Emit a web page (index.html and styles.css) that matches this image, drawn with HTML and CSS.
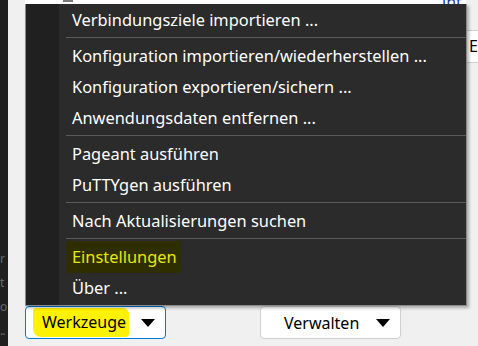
FILE: index.html
```html
<!DOCTYPE html>
<html lang="de">
  <head>
    <meta charset="UTF-8" />
    <title>Werkzeuge</title>
    <link rel="stylesheet" href="styles.css">
  </head>
  <body>
    <div class="side">
      <span>r</span>
      <span>t</span>
      <span>o</span>
      <span>..</span>
    </div>

    <div class="window">
      <div class="topstrip"><span class="tick"></span></div>
      <div class="rightpane">
        <span class="peek">int</span>
        <div class="field">E</div>
      </div>

      <div class="buttons">
        <button class="dropdown active"><span class="mark">Werkzeuge</span><span class="arrow"></span></button>
        <button class="dropdown plain"><span>Verwalten</span><span class="arrow"></span></button>
      </div>

      <div class="menu">
        <div class="gutter"></div>
        <ul class="items">
          <li>Verbindungsziele importieren ...</li>
          <li class="sep"></li>
          <li>Konfiguration importieren/wiederherstellen ...</li>
          <li>Konfiguration exportieren/sichern ...</li>
          <li>Anwendungsdaten entfernen ...</li>
          <li class="sep"></li>
          <li>Pageant ausführen</li>
          <li>PuTTYgen ausführen</li>
          <li class="sep"></li>
          <li>Nach Aktualisierungen suchen</li>
          <li class="sep"></li>
          <li class="hilite"><span>Einstellungen</span></li>
          <li>Über ...</li>
        </ul>
      </div>
    </div>
  </body>
</html>
```

FILE: styles.css
```css
html {
  font-family: "Noto Sans", sans-serif;
}

body {
  margin: 0;
  width: 478px;
  height: 346px;
  overflow: hidden;
  display: flex;
  background-color: #f0f0f0;
}

.side {
  width: 8px;
  background-color: #1f1f1f;
  color: #6a6a6a;
  font-size: 12px;
  display: flex;
  flex-direction: column;
  padding-top: 250px;
  overflow: hidden;
}

.side span {
  height: 24px;
  letter-spacing: -1px;
}

.window {
  position: relative;
  flex: 1;
}

.topstrip {
  height: 4px;
  background-color: #fff;
  margin-left: 17px;
  margin-right: 12px;
}

.tick {
  display: block;
  width: 10px;
  height: 2px;
  margin-left: 38px;
  background-color: #7a7a7a;
}

.rightpane {
  position: absolute;
  top: 0;
  right: 0;
  width: 40px;
  height: 70px;
}

.peek {
  position: absolute;
  top: -9px;
  left: 4px;
  color: #1a3fa0;
  font-size: 16px;
}

.field {
  position: absolute;
  top: 30px;
  left: 0;
  width: 40px;
  height: 33px;
  background-color: #fff;
  border-top: 1px solid #d0d0d0;
  border-bottom: 1px solid #d0d0d0;
  box-sizing: border-box;
  padding: 4px 0 0 31px;
  font-size: 16px;
  color: #000;
}

.buttons {
  position: absolute;
  left: 17px;
  top: 306px;
  display: flex;
  gap: 94px;
}

.dropdown {
  width: 141px;
  height: 33px;
  background-color: #fff;
  border: 1px solid #d0d0d0;
  border-radius: 4px;
  font-family: "Noto Sans", sans-serif;
  font-size: 16px;
  color: #000;
  display: flex;
  align-items: center;
  justify-content: space-between;
  padding: 0 8px 0 7px;
}

.dropdown.active {
  border-color: #0078d7;
}

.dropdown.plain {
  padding-left: 23px;
}

.mark {
  background-color: #fff200;
  padding: 3px 3px 4px 9px;
  border-radius: 3px 6px 4px 8px;
}

.arrow {
  width: 0;
  height: 0;
  border-left: 7px solid transparent;
  border-right: 7px solid transparent;
  border-top: 8px solid #000;
  margin-right: 2px;
}

.menu {
  position: absolute;
  left: 17px;
  top: 4px;
  width: 440px;
  height: 301px;
  display: flex;
  background-color: #2b2b2b;
  border: 1px solid #8a8a8a;
  border-top: none;
  box-shadow: 2px 2px 3px rgba(0, 0, 0, 0.3);
}

.gutter {
  width: 33px;
  background-color: #202020;
}

.items {
  list-style: none;
  margin: 0;
  padding: 0;
  flex: 1;
  color: #fff;
  font-size: 16.4px;
}

.items li {
  height: 31px;
  line-height: 31px;
  padding-left: 13px;
  white-space: nowrap;
}

.items li.sep {
  height: 1px;
  margin: 2px 0 2px 7px;
  padding: 0;
  background-color: #5a5a5a;
}

.hilite span {
  background-color: #2e2e00;
  color: #e8e800;
  padding: 4px 4px 5px 6px;
  margin-left: -6px;
}
```
